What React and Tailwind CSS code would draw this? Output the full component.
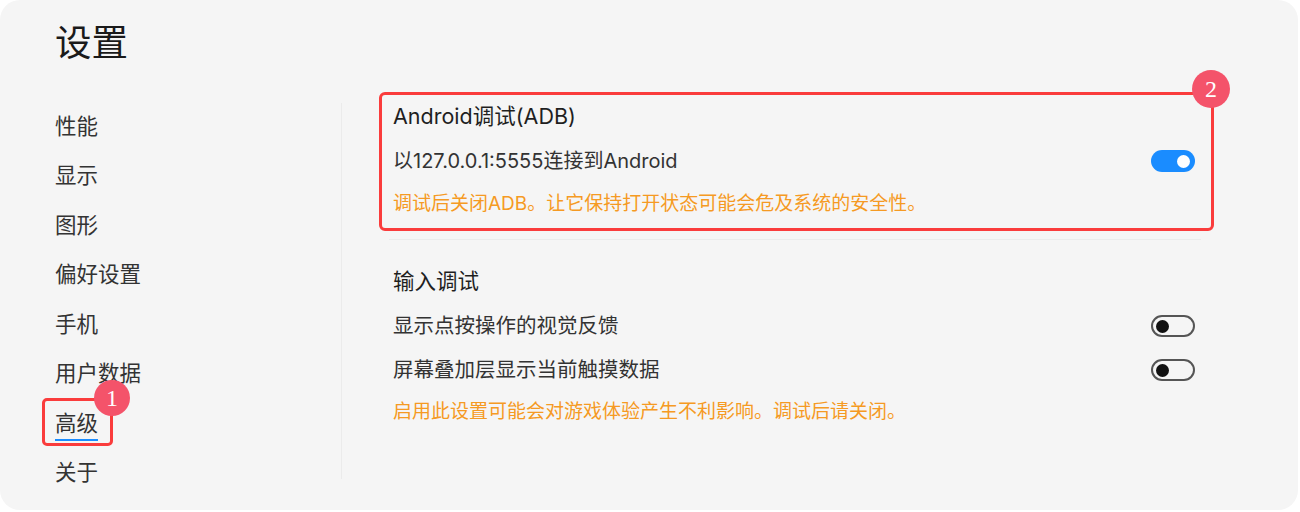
import React from 'react';

const font = { fontFamily: 'Inter, "Noto Sans CJK SC", sans-serif' };

const navItems = ['性能', '显示', '图形', '偏好设置', '手机', '用户数据', '高级', '关于'];

function Badge({ n, className }) {
  return (
    <div
      className={`absolute rounded-full bg-[#f4536a] text-white flex items-center justify-center text-[24px] leading-none ${className}`}
      style={{ fontFamily: '"Liberation Serif", serif' }}
    >
      {n}
    </div>
  );
}

function Toggle({ on }) {
  if (on) {
    return (
      <div className="w-[44px] h-[22px] rounded-full bg-[#1a8cff] flex items-center justify-end pr-[5px]">
        <div className="w-[13px] h-[13px] rounded-full bg-white" />
      </div>
    );
  }
  return (
    <div className="w-[44px] h-[22px] rounded-full border-2 border-[#555] flex items-center pl-[3px]">
      <div className="w-[13px] h-[13px] rounded-full bg-[#111]" />
    </div>
  );
}

export default function App() {
  return (
    <div className="w-[1300px] h-[512px] bg-white" style={font}>
      <div className="w-[1298px] h-[510px] rounded-[20px] bg-[#f5f5f5] flex">
        {/* SIDEBAR */}
        <div className="w-[341px] pl-[55px] pt-[20px]">
          <div className="h-[46px] text-[36.5px] leading-[46px] text-[#1a1a1a]">设置</div>
          <div className="mt-[35px] flex flex-col">
            {navItems.map(item => (
              <div key={item} className="h-[49.5px] flex items-center text-[21.5px] text-[#333]">
                {item === '高级' ? (
                  <div className="relative">
                    <span className="relative">
                      高级
                      <span className="absolute left-0 right-0 top-[29px] h-[2px] bg-[#1a8cff]" />
                    </span>
                    <div className="absolute left-[-13px] top-[-9px] w-[71px] h-[48px] border-[3px] border-[#fa3c3c] rounded-[5px]" />
                    <Badge n="1" className="w-[36px] h-[36px] left-[39px] top-[-27px]" />
                  </div>
                ) : (
                  item
                )}
              </div>
            ))}
          </div>
        </div>

        {/* CONTENT */}
        <div className="mt-[103px] h-[376px] border-l border-[#ebebeb]">
          <div className="relative ml-[47px] w-[812px]">
            <div className="absolute left-[-10px] top-[-11px] w-[835px] h-[139px] border-[3px] border-[#fa3c3c] rounded-[6px]" />
            <Badge n="2" className="left-[803px] top-[-33px] w-[38px] h-[38px]" />

            <div className="px-[4px] pr-[6px]">
              <div className="h-[26px] leading-[26px] text-[21.5px] text-[#1f1f1f]">Android调试(ADB)</div>
              <div className="mt-[17px] h-[30px] flex items-center justify-between">
                <span className="text-[20px] text-[#333]">以127.0.0.1:5555连接到Android</span>
                <Toggle on />
              </div>
              <div className="mt-[16px] h-[24px] leading-[24px] text-[19px] text-[#f59a23]">
                调试后关闭ADB。让它保持打开状态可能会危及系统的安全性。
              </div>
            </div>

            <div className="mt-[23px] border-t border-[#ebebeb]" />

            <div className="px-[4px] pr-[6px]">
              <div className="mt-[28px] h-[26px] leading-[26px] text-[21.5px] text-[#1f1f1f]">输入调试</div>
              <div className="mt-[17px] h-[30px] flex items-center justify-between">
                <span className="text-[20.5px] text-[#333]">显示点按操作的视觉反馈</span>
                <Toggle />
              </div>
              <div className="mt-[14px] h-[30px] flex items-center justify-between">
                <span className="text-[20.5px] text-[#333]">屏幕叠加层显示当前触摸数据</span>
                <Toggle />
              </div>
              <div className="mt-[15px] h-[24px] leading-[24px] text-[19px] text-[#f59a23]">
                启用此设置可能会对游戏体验产生不利影响。调试后请关闭。
              </div>
            </div>
          </div>
        </div>
      </div>
    </div>
  );
}
